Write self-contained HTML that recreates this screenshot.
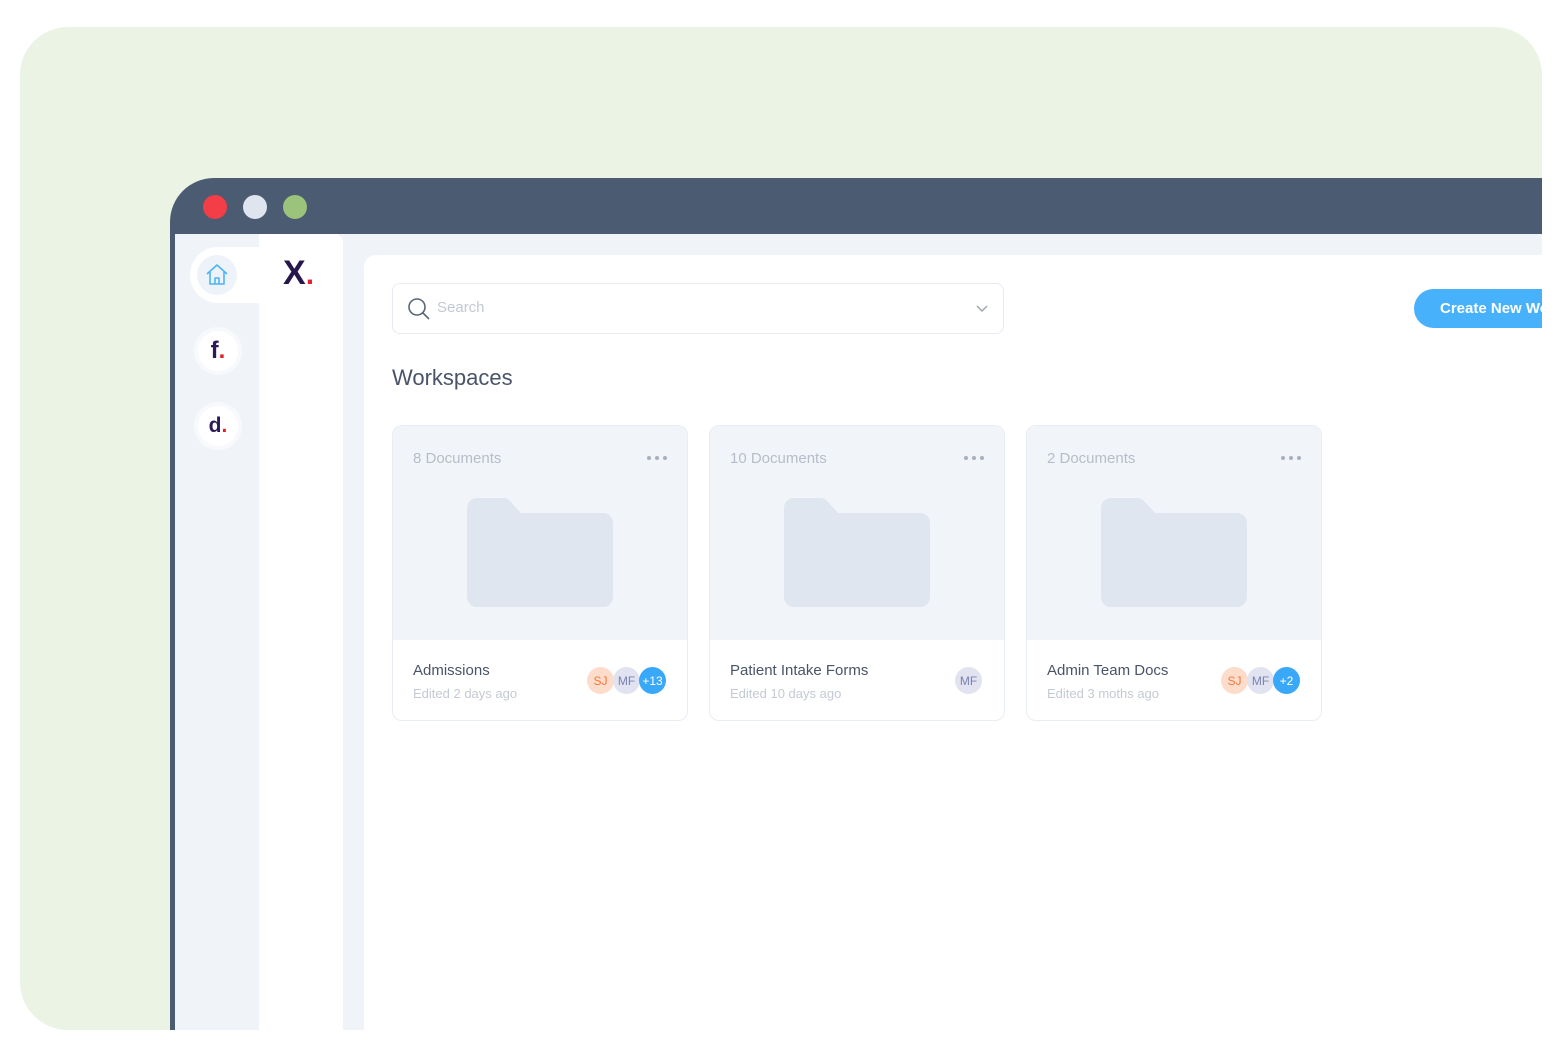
<!DOCTYPE html>
<html><head><meta charset="utf-8"><style>
*{margin:0;padding:0;box-sizing:border-box}
body{width:1563px;height:1050px;background:#fff;position:relative;overflow:hidden;font-family:"Liberation Sans",sans-serif}
.abs{position:absolute}
.green{left:20px;top:27px;width:1522px;height:1003px;background:#ebf3e5;border-radius:48px}
.win{left:170px;top:178px;width:1372px;height:852px;background:#4a5b72;border-radius:44px 0 0 0;overflow:hidden}
.dot{top:195px;width:24px;height:24px;border-radius:50%}
.body{left:175px;top:234px;width:1367px;height:796px;background:#f0f3f8}
.logo{left:259px;top:234px;width:84px;height:796px;background:#fff;border-radius:0 8px 0 0}
.main{left:364px;top:255px;width:1178px;height:775px;background:#fff;border-radius:12px 0 0 0}
.circ{width:40px;height:40px;border-radius:50%;background:#fff;box-shadow:0 0 0 4px #f7f9fc;display:flex;align-items:center;justify-content:center;font-size:24px;color:#2b1a57;font-weight:bold}
.card{top:425px;width:296px;height:296px;border:1px solid #e8edf4;border-radius:10px;overflow:hidden;background:#fff}
.card .top{height:214px;background:#f1f4f9;position:relative}
.cnt{position:absolute;left:20px;top:24px;font-size:15px;color:#b6bdc9}
.dots{position:absolute;right:20px;top:30px;display:flex;gap:4px}
.dots i{width:4px;height:4px;border-radius:50%;background:#a8b0bd;display:block}
.fold{position:absolute;left:74px;top:72px}
.name{position:absolute;left:20px;top:236px;font-size:15px;color:#4a5468}
.ed{position:absolute;left:20px;top:260px;font-size:13px;color:#c4cad3}
.av{position:absolute;top:241px;width:27px;height:27px;border-radius:50%;font-size:12px;display:flex;align-items:center;justify-content:center}
.sj{background:#fddccb;color:#f47a3c}.mf{background:#e1e3f0;color:#7a82b0}.pl{background:#3aa8f8;color:#fff}
</style></head><body>
<div class="abs green"></div>
<div class="abs win"></div>
<div class="abs dot" style="left:203px;background:#f33d47"></div>
<div class="abs dot" style="left:243px;background:#dfe5ee"></div>
<div class="abs dot" style="left:283px;background:#9bc37b"></div>
<div class="abs body"></div>
<div class="abs" style="left:217px;top:247px;width:42px;height:56px;background:#fff"></div>
<div class="abs" style="left:190px;top:247px;width:56px;height:56px;border-radius:50%;background:#fff"></div>
<div class="abs" style="left:217px;top:234px;width:42px;height:13px;background:#f0f3f8;border-radius:0 0 12px 0"></div>
<div class="abs" style="left:217px;top:303px;width:42px;height:13px;background:#f0f3f8;border-radius:0 12px 0 0"></div>
<div class="abs" style="left:244px;top:234px;width:15px;height:6px;background:#f0f3f8"></div>
<div class="abs circ" style="left:197px;top:255px;background:#eef3f9;box-shadow:none">
<svg width="26" height="26" viewBox="0 0 26 26" fill="none" stroke="#4eb3fb" stroke-width="1.6" stroke-linejoin="round"><path d="M3 12L13 3l10 9M6 10v12h14V10"/><path d="M11 22v-6h4v6"/></svg></div>
<div class="abs circ" style="left:198px;top:331px">f<span style="color:#e4202a">.</span></div>
<div class="abs circ" style="left:198px;top:406px;font-size:21px">d<span style="color:#e4202a">.</span></div>
<div class="abs logo"></div>
<div class="abs" style="left:283px;top:254px;font-size:34px;font-weight:bold;color:#27174f">X<span style="color:#e8202f;font-size:30px">.</span></div>
<div class="abs main"></div>
<div class="abs" style="left:392px;top:283px;width:612px;height:51px;border:1px solid #e6ebf2;border-radius:8px;background:#fff"></div>
<svg class="abs" style="left:406px;top:296px" width="26" height="26" viewBox="0 0 26 26" fill="none" stroke="#5a6576" stroke-width="1.6"><circle cx="11" cy="11" r="8"/><path d="M17 17l6 6"/></svg>
<div class="abs" style="left:437px;top:299px;font-size:15px;color:#c3c9d3">Search</div>
<svg class="abs" style="left:975px;top:304px" width="14" height="10" viewBox="0 0 14 10" fill="none" stroke="#9aa3b0" stroke-width="1.4"><path d="M2 2l5 5 5-5"/></svg>
<div class="abs" style="left:392px;top:365px;font-size:22px;color:#4a5468">Workspaces</div>
<div class="abs" style="left:1414px;top:289px;width:160px;height:39px;border-radius:20px;background:#48b1fb;color:#fff;font-size:15px;font-weight:bold;padding:11px 0 0 26px;white-space:nowrap">Create New Workspace</div>
<div class="abs" style="left:1542px;top:0;width:21px;height:1050px;background:#fff"></div>
<div class="abs" style="left:0;top:1030px;width:1563px;height:20px;background:#fff"></div>

<div class="abs card" style="left:392px"><div class="top"><div class="cnt">8 Documents</div><div class="dots"><i></i><i></i><i></i></div>
<svg class="fold" width="146" height="110" viewBox="0 0 146 110"><path d="M0 10a10 10 0 0 1 10-10h26a8 8 0 0 1 6 2l12 13h82a10 10 0 0 1 10 10v74a10 10 0 0 1-10 10H10A10 10 0 0 1 0 99z" fill="#dfe6ef"/></svg></div>
<div class="name">Admissions</div><div class="ed">Edited 2 days ago</div>
<div class="av sj" style="left:194px">SJ</div><div class="av mf" style="left:220px">MF</div><div class="av pl" style="left:246px">+13</div></div>

<div class="abs card" style="left:709px"><div class="top"><div class="cnt">10 Documents</div><div class="dots"><i></i><i></i><i></i></div>
<svg class="fold" width="146" height="110" viewBox="0 0 146 110"><path d="M0 10a10 10 0 0 1 10-10h26a8 8 0 0 1 6 2l12 13h82a10 10 0 0 1 10 10v74a10 10 0 0 1-10 10H10A10 10 0 0 1 0 99z" fill="#dfe6ef"/></svg></div>
<div class="name">Patient Intake Forms</div><div class="ed">Edited 10 days ago</div>
<div class="av mf" style="left:245px">MF</div></div>

<div class="abs card" style="left:1026px"><div class="top"><div class="cnt">2 Documents</div><div class="dots"><i></i><i></i><i></i></div>
<svg class="fold" width="146" height="110" viewBox="0 0 146 110"><path d="M0 10a10 10 0 0 1 10-10h26a8 8 0 0 1 6 2l12 13h82a10 10 0 0 1 10 10v74a10 10 0 0 1-10 10H10A10 10 0 0 1 0 99z" fill="#dfe6ef"/></svg></div>
<div class="name">Admin Team Docs</div><div class="ed">Edited 3 moths ago</div>
<div class="av sj" style="left:194px">SJ</div><div class="av mf" style="left:220px">MF</div><div class="av pl" style="left:246px">+2</div></div>
</body></html>
